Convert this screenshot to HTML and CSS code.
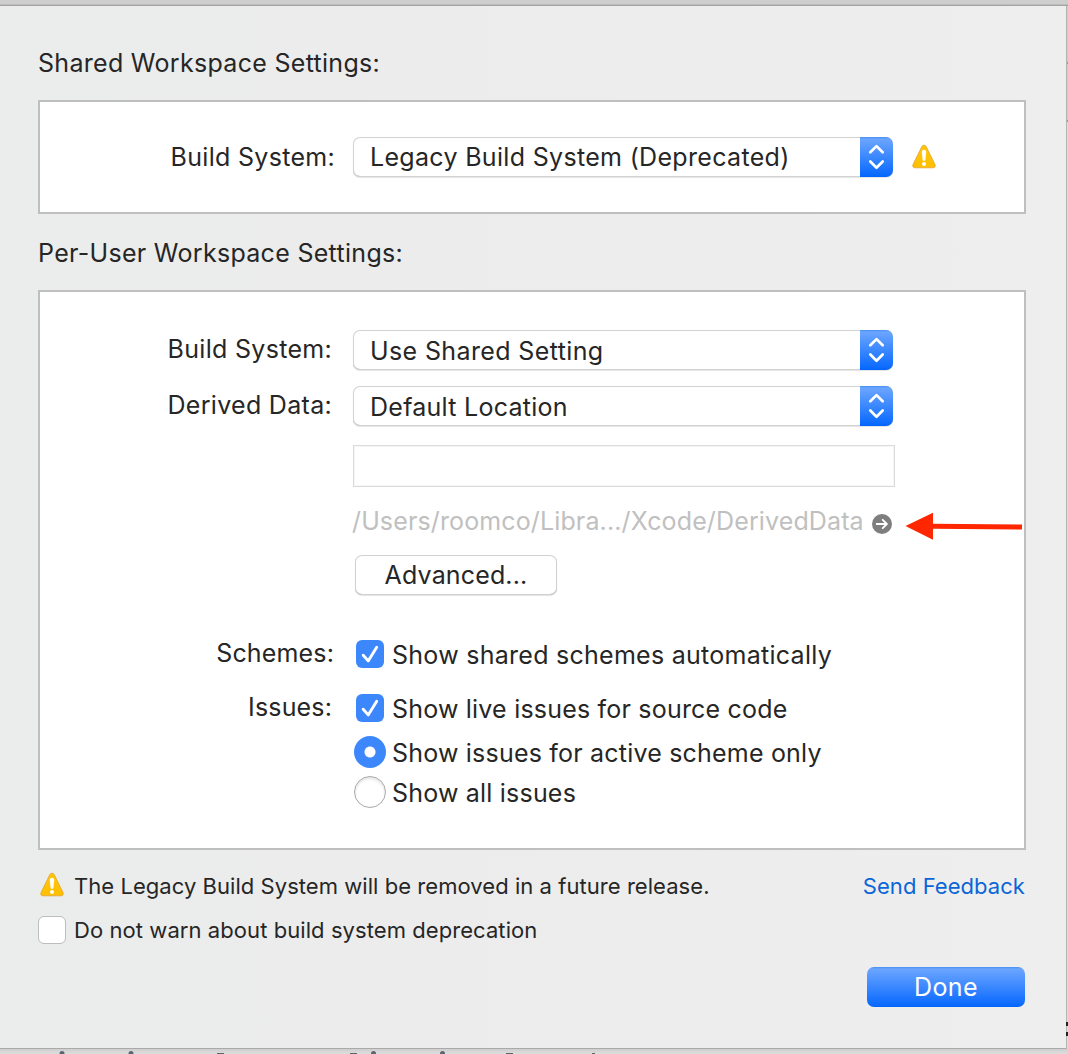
FILE: index.html
```html
<!DOCTYPE html>
<html lang="en">
<head>
<meta charset="utf-8">
<title>Workspace Settings</title>
<link rel="stylesheet" href="styles.css">
</head>
<body>
<svg width="0" height="0" class="defs">
  <defs>
    <linearGradient id="amber" x1="0" y1="0" x2="0" y2="1"><stop offset="0" stop-color="#ffc60c"/><stop offset="1" stop-color="#ffbf00"/></linearGradient>
    <symbol id="warning" viewBox="0 0 24 25">
      <path d="M12 1.2c-1 0-1.7.5-2.2 1.4L1 20.600c-.8 1.900.100 3.200 1.900 3.200h18.200c1.800 0 2.700-1.300 1.900-3.200L14.200 2.600C13.700 1.700 13 1.200 12 1.200z" fill="url(#amber)" stroke="#dfa62a" stroke-width=".8"/>
      <path d="M12 5.800c-1.500 0-2.300.9-2.200 2.300l.7 7.100c.1 1.100.6 1.700 1.500 1.700s1.400-.6 1.500-1.700l.7-7.100c.1-1.400-.7-2.300-2.200-2.300z" fill="#fff"/>
      <circle cx="12" cy="19.900" r="2" fill="#fff"/>
    </symbol>
    <symbol id="chevrons" viewBox="0 0 33 40">
      <path d="M10.300 15.300l6.200-6.200 6.200 6.200M10.300 24.500l6.200 6.200 6.200-6.200" fill="none" stroke="#fff" stroke-width="2.700" stroke-linecap="round" stroke-linejoin="round"/>
    </symbol>
    <symbol id="check" viewBox="0 0 28 28">
      <path d="M7.200 15.200l5 5.700L20.700 7.300" fill="none" stroke="#fff" stroke-width="2.900" stroke-linecap="round" stroke-linejoin="round"/>
    </symbol>
  </defs>
</svg>
<div class="desktop">
  <div class="toolbar"></div>
  <main class="sheet">
    <h2 class="heading"><span class="t-shared">Shared Workspace Settings:</span></h2>
    <section class="box box-shared">
      <div class="row row-legacy">
        <span class="label">Build System:</span>
        <div class="popup"><span class="value t-legacy">Legacy Build System (Deprecated)</span><svg class="cap"><use href="#chevrons"/></svg></div>
        <svg class="warn"><use href="#warning"/></svg>
      </div>
    </section>
    <h2 class="heading heading-user"><span class="t-user">Per-User Workspace Settings:</span></h2>
    <section class="box box-user">
      <div class="row row-build">
        <span class="label">Build System:</span>
        <div class="popup"><span class="value t-use">Use Shared Setting</span><svg class="cap"><use href="#chevrons"/></svg></div>
      </div>
      <div class="row row-derived">
        <span class="label">Derived Data:</span>
        <div class="popup"><span class="value t-default">Default Location</span><svg class="cap"><use href="#chevrons"/></svg></div>
      </div>
      <div class="field"></div>
      <div class="path-row">
        <span class="path">/Users/roomco/Libra.../Xcode/DerivedData</span>
        <svg class="go" viewBox="0 0 20 20"><circle cx="10" cy="10" r="10" fill="#7e7e7e"/><path d="M4.700 10h10M10.700 5.800l4.200 4.200-4.200 4.200" fill="none" stroke="#fff" stroke-width="1.800" stroke-linecap="round" stroke-linejoin="round"/></svg>
        <svg class="arrow" viewBox="0 0 118 28"><path d="M.5 14L28 .8V11.800L117 12.600v5L28 16.800V27.800z" fill="#ff2600"/></svg>
      </div>
      <button class="advanced"><span class="t-advanced">Advanced...</span></button>
      <div class="option option-schemes"><span class="label">Schemes:</span><svg class="checkbox on"><use href="#check"/></svg><span class="t-schemes">Show shared schemes automatically</span></div>
      <div class="option option-issues"><span class="label">Issues:</span><svg class="checkbox on"><use href="#check"/></svg><span class="t-live">Show live issues for source code</span></div>
      <div class="option option-active"><span class="label"></span><span class="radio selected"></span><span class="t-active">Show issues for active scheme only</span></div>
      <div class="option option-all"><span class="label"></span><span class="radio"></span><span class="t-all">Show all issues</span></div>
    </section>
    <div class="notice"><svg class="warn"><use href="#warning"/></svg><span class="t-notice">The Legacy Build System will be removed in a future release.</span><a class="link">Send Feedback</a></div>
    <div class="suppress"><span class="checkbox off"></span><span class="t-suppress">Do not warn about build system deprecation</span></div>
    <button class="done"><span class="t-done">Done</span></button>
  </main>
  <aside class="edge"><svg class="edge-marks" viewBox="0 0 2 16"><path d="M0 2h2v4H0zM0 12h2v4H0z" fill="#222"/></svg></aside>
  <footer class="behind">
    <svg width="1068" height="5" viewBox="0 0 1068 5">
      <g fill="#5b6570"><circle cx="62" cy="4.500" r="2.500"/><circle cx="131" cy="4.500" r="2.500"/><circle cx="373.500" cy="4.500" r="2.500"/><circle cx="442.500" cy="4.500" r="2.500"/></g>
      <path d="M217 4h7v1h-7zM350 4h7v1h-7zM506 4h7v1h-7zM592 4h3v1h-3z" fill="#5f6266"/>
    </svg>
  </footer>
</div>
</body>
</html>
```
FILE: styles.css
```css
* { box-sizing: border-box; }
body { margin: 0; font-family: Inter, "Liberation Sans", sans-serif; font-size: 25px; line-height: 32px; color: #262626; overflow: hidden; }
.defs { position: absolute; }
span, a { white-space: nowrap; }
.desktop { width: 1068px; height: 1054px; display: grid; grid-template: 6px 1043px 5px / 1067px 1px; overflow: hidden; background: #d8d8d8; }
.toolbar { grid-column: 1 / 3; background: linear-gradient(#cecece 0 4px, #bcbcbc 4px 5px, #a4a4a4 5px); }
.sheet { background: linear-gradient(90deg, #ebecec, #ececec 30%, #eee); border-right: 1px solid #b5b5b5; border-bottom: 1px solid #aaa; padding: 41px 41px 0 38px; display: flex; flex-direction: column; }
.edge { background: linear-gradient(#ccc 0 56px, #999 56px 58px, #ccc 58px 114px, #999 114px 116px, #ddd 116px); display: flex; align-items: flex-end; justify-content: flex-end; padding-bottom: 13px; }
.edge-marks { width: 2px; height: 16px; flex: none; }
.behind { grid-column: 1 / 3; background: linear-gradient(#cfcfcf, #dedede); }
.behind svg { display: block; }
.heading { margin: 0; font: inherit; height: 32px; letter-spacing: .3px; }
.box { background: #fff; border: 2px solid #bfbfbf; width: 988px; }
.box-shared { height: 114px; margin-top: 21px; padding-top: 35px; }
.heading-user { margin-top: 23px; }
.box-user { height: 560px; margin-top: 21px; padding-top: 38px; display: flex; flex-direction: column; align-items: flex-start; }
.row { display: flex; height: 40px; letter-spacing: .3px; }
.label { width: 292px; text-align: right; line-height: 38px; flex: none; }
.row-legacy .label { width: 295px; line-height: 40px; }
.row-legacy .popup { margin-left: 18px; }
.popup { margin-left: 21px; width: 540px; height: 40px; display: flex; justify-content: space-between; border-radius: 7px; background: #fff; box-shadow: inset 0 0 0 1px #d2d2d2, inset 0 -1px 0 #b8b8b8, 0 1px 1px #e4e4e4; overflow: hidden; }
.value { padding-left: 17px; line-height: 42px; }
.t-legacy { line-height: 40px; letter-spacing: .32px; }
.t-use { letter-spacing: .38px; }
.t-default { letter-spacing: .26px; }
.cap { width: 33px; height: 40px; background: linear-gradient(#478ff1, #6ba5ff 2px, #0a6aff 38px, #0064f7); }
.row .warn { margin: 7px 0 0 19px; }
.warn { width: 24px; height: 25px; }
.row-derived { margin-top: 16px; }
.field { margin: 19px 0 0 313px; width: 542px; height: 42px; border: 1px solid #dcdcdc; box-shadow: inset 0 0 0 1px #f5f5f5; }
.path-row { margin: 18px 0 0 312px; height: 34px; display: flex; align-items: flex-start; color: #c0c0c0; }
.path { width: 512px; letter-spacing: .13px; }
.go { width: 20px; height: 20px; margin: 9px 0 0 8px; flex: none; }
.arrow { width: 118px; height: 28px; margin: 7px 0 0 13px; flex: none; }
button { font: inherit; border: 0; padding: 0; height: 40px; border-radius: 7px; color: #262626; }
.advanced { margin: 16px 0 0 315px; width: 202px; background: #fff; box-shadow: inset 0 0 0 1px #d0d0d0, inset 0 -1px 0 #b8b8b8, 0 1px 1px #e4e4e4; letter-spacing: .15px; }
.option { display: flex; height: 32px; align-items: center; }
.option .label { line-height: 30px; height: 32px; letter-spacing: .15px; }
.option-schemes { margin-top: 43px; }
.option-schemes .label { width: 294px; }
.option-schemes .on { margin-left: 22px; }
.option-issues { margin-top: 22px; }
.option-active { margin-top: 12px; }
.option-all { margin-top: 8px; }
.option > :last-child { padding-top: 2px; letter-spacing: .2px; }
.option > .t-schemes:last-child { letter-spacing: .27px; }
.checkbox { width: 28px; height: 28px; border-radius: 6px; flex: none; }
.on { background: #3d87fc; margin: 0 8px 0 24px; }
.off { background: #fff; border: 1px solid #bdbdbd; margin-right: 8px; }
.radio { width: 32px; height: 32px; border-radius: 50%; border: 1px solid #a9a9a9; box-shadow: inset 0 2px 3px #e4e4e4; margin: 0 6px 0 22px; flex: none; }
.selected { border: 0; box-shadow: none; background: radial-gradient(circle, #fff 5px, #3d87fc 6px); }
.notice { margin-top: 20px; height: 32px; display: flex; align-items: center; font-size: 22px; letter-spacing: .05px; }
.notice .warn { margin: 0 10px 4px 2px; }
.link { margin-left: auto; color: #0a66d8; }
.suppress { margin-top: 13px; height: 30px; display: flex; align-items: center; font-size: 22px; letter-spacing: .07px; }
.done { align-self: flex-end; margin-top: 22px; width: 158px; color: #fff; background: linear-gradient(#478ff1, #6ba5ff 2px, #0a6aff 38px, #0064f7); letter-spacing: .4px; }
```
